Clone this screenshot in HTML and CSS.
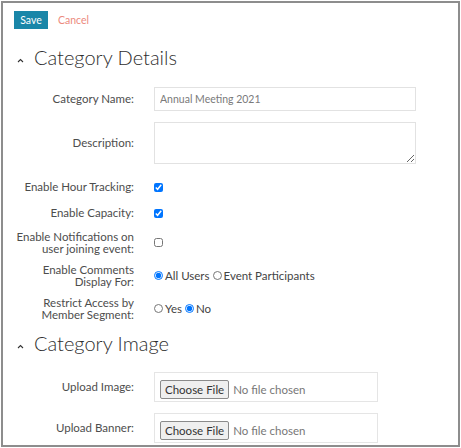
FILE: index.html
```html
<!DOCTYPE html>
<html>
<head>
<meta charset="utf-8">
<link rel="stylesheet" href="styles.css">
</head>
<body>
<div class="frame">
  <div class="toolbar">
    <button class="btn-save">Save</button>
    <a class="btn-cancel">Cancel</a>
  </div>

  <div class="section-head">
    <svg class="chev" width="7" height="5" viewBox="0 0 7 5"><path d="M1 4 L3.5 1.5 L6 4" fill="none" stroke="#333" stroke-width="1.1"/></svg>
    <h2>Category Details</h2>
  </div>

  <div class="row row-input">
    <label class="lbl">Category Name:</label>
    <input class="text" type="text" value="Annual Meeting 2021">
  </div>
  <div class="row row-area">
    <label class="lbl">Description:</label>
    <textarea class="area"></textarea>
  </div>
  <div class="row row-check">
    <label class="lbl">Enable Hour Tracking:</label>
    <div class="opts"><input class="cb" type="checkbox" checked></div>
  </div>
  <div class="row row-check">
    <label class="lbl">Enable Capacity:</label>
    <div class="opts"><input class="cb" type="checkbox" checked></div>
  </div>
  <div class="row row-check">
    <label class="lbl">Enable Notifications on<br>user joining event:</label>
    <div class="opts"><input class="cb" type="checkbox"></div>
  </div>
  <div class="row row-check">
    <label class="lbl">Enable Comments<br>Display For:</label>
    <div class="opts"><input class="rd" type="radio" name="c" checked><span>All Users</span><input class="rd" type="radio" name="c"><span>Event Participants</span></div>
  </div>
  <div class="row row-check">
    <label class="lbl">Restrict Access by<br>Member Segment:</label>
    <div class="opts"><input class="rd" type="radio" name="m"><span>Yes</span><input class="rd" type="radio" name="m" checked><span>No</span></div>
  </div>

  <div class="section-head second">
    <svg class="chev" width="7" height="5" viewBox="0 0 7 5"><path d="M1 4 L3.5 1.5 L6 4" fill="none" stroke="#333" stroke-width="1.1"/></svg>
    <h2>Category Image</h2>
  </div>

  <div class="row row-file">
    <label class="lbl">Upload Image:</label>
    <div class="filebox"><input class="file" type="file"></div>
  </div>
  <div class="row row-file">
    <label class="lbl">Upload Banner:</label>
    <div class="filebox"><input class="file" type="file"></div>
  </div>
</div>
</body>
</html>
```
FILE: styles.css
```css
html, body {
  margin: 0;
  padding: 0;
  background: #fff;
}
body {
  font-family: Lato, "Noto Sans", sans-serif;
  color: #444;
}
.frame {
  margin: 1px;
  width: 459px;
  height: 446px;
  box-sizing: border-box;
  border: 2px solid #8d8d8d;
  overflow: hidden;
  padding: 8px 0 0 11px;
}
.toolbar {
  display: flex;
  align-items: center;
  gap: 10px;
}
.btn-save {
  background: #1a86a8;
  color: #fff;
  border: none;
  font-family: inherit;
  font-size: 10.5px;
  width: 34px;
  height: 18px;
  padding: 0;
}
.btn-cancel {
  color: #ec8a7d;
  font-size: 10.5px;
}
.section-head {
  display: flex;
  align-items: center;
  margin-top: 16px;
  margin-bottom: 18px;
  height: 24px;
}
.section-head.second {
  margin-top: 11px;
  margin-bottom: 17px;
}
.chev {
  margin: 6px 10px 0 3px;
}
.section-head h2 {
  margin: 0;
  font-weight: 300;
  font-size: 20px;
  color: #2e2e2e;
  line-height: 24px;
}
.row {
  display: grid;
  grid-template-columns: 120px 262px;
  column-gap: 20px;
  align-items: center;
  margin-bottom: 11px;
}
.row-area {
  margin-bottom: 15px;
}
.row-check {
  margin-bottom: 10px;
  min-height: 16px;
}
.lbl {
  text-align: right;
  font-size: 11.5px;
  line-height: 11.5px;
  color: #4d4d4d;
}
.text {
  box-sizing: border-box;
  height: 24px;
  border: 1px solid #e2e2e2;
  padding: 0 5px;
  font-family: inherit;
  font-size: 10.5px;
  color: #7a7a7a;
  outline: none;
}
.area {
  box-sizing: border-box;
  height: 42px;
  width: 262px;
  border: 1px solid #e2e2e2;
  resize: vertical;
  outline: none;
}
.cb, .rd {
  width: 9px;
  height: 9px;
  margin: 0;
}
.opts {
  display: flex;
  align-items: center;
  font-size: 11.5px;
  line-height: 13px;
  color: #444;
}
.opts span {
  margin: 0 3px 0 2px;
}
.filebox {
  box-sizing: border-box;
  width: 224px;
  height: 30px;
  border: 1px solid #e5e5e5;
  padding: 5px 5px;
}
.file {
  font-family: inherit;
  font-size: 11.5px;
  color: #777;
}
.file::file-selector-button {
  font-family: inherit;
  font-size: 11.5px;
  color: #333;
  height: 19px;
  padding: 0 4px;
  margin-right: 4px;
  border: 1px solid #8a8a8a;
  border-radius: 2px;
  background: #efefef;
}
```
